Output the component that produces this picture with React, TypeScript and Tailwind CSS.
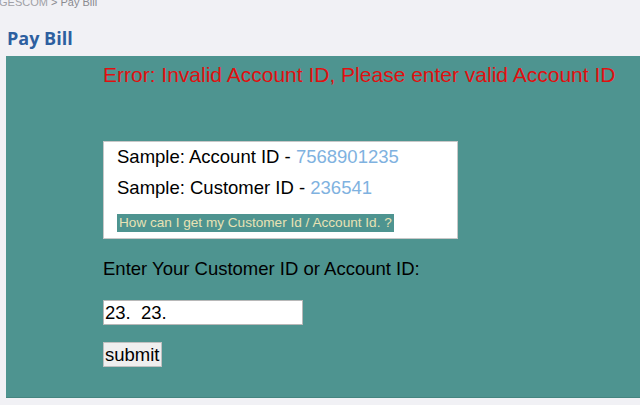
export default function App() {
  return (
    <div className="w-[640px] h-[405px] overflow-hidden bg-[#f1f1f5] font-['Liberation_Sans',Arial,sans-serif]">
      <div className="-mt-[4px] -ml-[1px] text-[11px] leading-[13px] text-[#a0a0a6]">
        GESCOM <span className="text-[#8a8a90]">&gt; Pay Bill</span>
      </div>
      <h1 className="mt-[17px] pl-[7px] font-['Open_Sans',sans-serif] text-[18px] font-bold leading-[24px] text-[#2d5fa0]">
        Pay Bill
      </h1>
      <div className="ml-[6px] mt-[6px] h-[342px] border-b border-[#458580] bg-[#4e9490] pl-[97px] pt-[7px]">
        <p className="text-[21px] leading-[24px] text-[#e01010]">
          Error: Invalid Account ID, Please enter valid Account ID
        </p>
        <div className="mt-[54px] w-[355px] border border-[#c8c8c8] bg-white pl-[13px] pt-[4px] pb-[6px]">
          <p className="text-[18.5px] leading-[22px] text-black">
            Sample: Account ID - <span className="text-[#7fb2e0]">7568901235</span>
          </p>
          <p className="mt-[9px] text-[18.5px] leading-[22px] text-black">
            Sample: Customer ID - <span className="text-[#7fb2e0]">236541</span>
          </p>
          <a className="mt-[15px] inline-block bg-[#4e9490] px-[2px] align-top text-[13.6px] leading-[18px] text-[#e8e2b4]">
            How can I get my Customer Id / Account Id. ?
          </a>
        </div>
        <p className="mt-[19px] text-[18.5px] leading-[22px] text-black">
          Enter Your Customer ID or Account ID:
        </p>
        <input
          defaultValue="23.  23."
          className="mt-[20px] block h-[25px] w-[200px] border border-[#b8b8b8] bg-white px-[1px] text-[18.5px] text-black outline-none"
        />
        <button className="mt-[17px] block h-[25px] border border-[#c0c0c0] bg-[#efefef] px-[1px] text-[18.5px] leading-[22px] text-black">
          submit
        </button>
      </div>
    </div>
  );
}
